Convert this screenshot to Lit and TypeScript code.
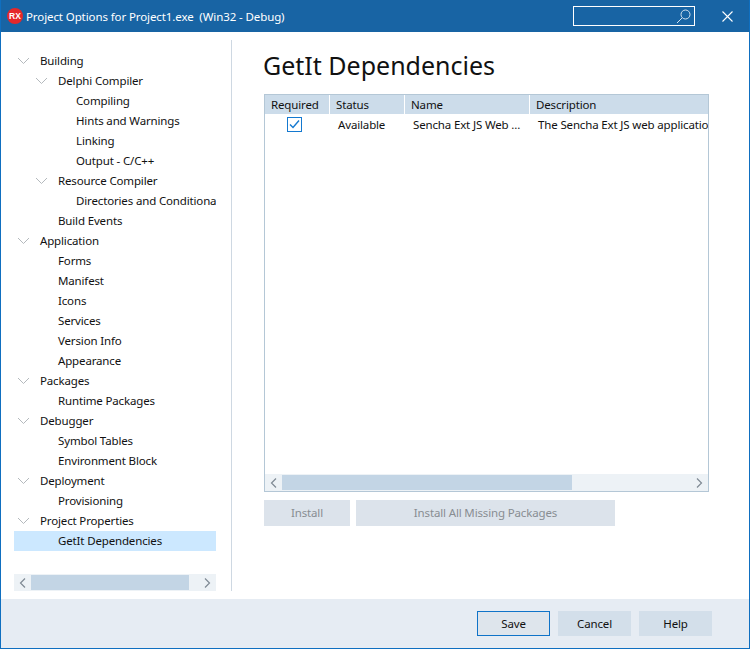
import { LitElement, html, css, svg } from 'lit';
import { customElement } from 'lit/decorators.js';

type TreeNode = { label: string; level: number; open?: boolean; selected?: boolean };

const tree: TreeNode[] = [
  { label: 'Building', level: 0, open: true },
  { label: 'Delphi Compiler', level: 1, open: true },
  { label: 'Compiling', level: 2 },
  { label: 'Hints and Warnings', level: 2 },
  { label: 'Linking', level: 2 },
  { label: 'Output - C/C++', level: 2 },
  { label: 'Resource Compiler', level: 1, open: true },
  { label: 'Directories and Conditionals', level: 2 },
  { label: 'Build Events', level: 1 },
  { label: 'Application', level: 0, open: true },
  { label: 'Forms', level: 1 },
  { label: 'Manifest', level: 1 },
  { label: 'Icons', level: 1 },
  { label: 'Services', level: 1 },
  { label: 'Version Info', level: 1 },
  { label: 'Appearance', level: 1 },
  { label: 'Packages', level: 0, open: true },
  { label: 'Runtime Packages', level: 1 },
  { label: 'Debugger', level: 0, open: true },
  { label: 'Symbol Tables', level: 1 },
  { label: 'Environment Block', level: 1 },
  { label: 'Deployment', level: 0, open: true },
  { label: 'Provisioning', level: 1 },
  { label: 'Project Properties', level: 0, open: true },
  { label: 'GetIt Dependencies', level: 1, selected: true },
];

const chevronDown = svg`<path d="M1 1l5.5 5.5L12 1" fill="none" stroke="#b4b9bd" stroke-width="1" />`;
const arrowLeft = html`<svg width="7" height="10" viewBox="0 0 7 10"><path d="M6 .5L1.5 5 6 9.5" fill="none" stroke="#7f8a94" stroke-width="1.2" /></svg>`;
const arrowRight = html`<svg width="7" height="10" viewBox="0 0 7 10"><path d="M1 .5L5.5 5 1 9.5" fill="none" stroke="#7f8a94" stroke-width="1.2" /></svg>`;

@customElement('app-root')
export class AppRoot extends LitElement {
  static styles = css`
    :host {
      display: block;
      width: 750px;
      height: 649px;
      font-family: 'Noto Sans', 'Open Sans', sans-serif;
      font-size: 11.5px;
      letter-spacing: -0.15px;
      color: #111;
    }

    .window {
      box-sizing: border-box;
      width: 750px;
      height: 649px;
      display: flex;
      flex-direction: column;
      border: 1px solid #0f6fc0;
      border-top: 0;
      background: #fff;
    }

    .titlebar {
      flex: none;
      height: 32px;
      display: flex;
      align-items: center;
      padding: 0 16px 0 6px;
      background: #1864a4;
      color: #fff;
    }

    .logo {
      width: 16px;
      height: 16px;
      border-radius: 50%;
      background: #e5282a;
      color: #fff;
      font: bold 8.5px/16px 'Liberation Sans', sans-serif;
      text-align: center;
      margin-right: 3px;
      letter-spacing: 0;
    }

    .title {
      flex: 1;
      white-space: pre;
      letter-spacing: -0.1px;
    }

    .search {
      box-sizing: border-box;
      width: 122px;
      height: 20px;
      border: 1px solid #fff;
      display: flex;
      align-items: center;
      justify-content: flex-end;
      padding-right: 3px;
      margin-right: 27px;
    }

    .close {
      display: block;
    }

    .main {
      flex: 1;
      min-height: 0;
      display: flex;
      padding: 8px 0 8px 13px;
    }

    .nav {
      flex: none;
      width: 202px;
      display: flex;
      flex-direction: column;
      padding-top: 11px;
    }

    .tree {
      flex: 1;
      overflow: hidden;
    }

    .row {
      height: 20px;
      display: flex;
      align-items: center;
      white-space: nowrap;
      overflow: hidden;
    }

    .row .label {
      padding-bottom: 2px;
    }

    .row.selected {
      background: #cce8ff;
    }

    .twisty {
      flex: none;
      width: 13px;
      height: 8px;
      margin-left: 3px;
      margin-right: 10px;
    }

    .scroll {
      flex: none;
      height: 17px;
      display: flex;
      align-items: center;
      background: #edf2f6;
    }

    .scroll .end {
      flex: none;
      width: 17px;
      display: flex;
      justify-content: center;
      align-items: center;
    }

    .thumb {
      height: 15px;
      background: #c3d5e5;
    }

    .gap {
      flex: 1;
    }

    .divider {
      flex: none;
      width: 1px;
      margin-left: 15px;
      background: #ced8e2;
    }

    .content {
      flex: 1;
      min-width: 0;
      padding: 0 40px 0 32px;
      display: flex;
      flex-direction: column;
    }

    h1 {
      box-sizing: border-box;
      margin: 0 0 0 -1px;
      height: 54px;
      padding-top: 7px;
      font-size: 25px;
      line-height: 36px;
      font-weight: 400;
      letter-spacing: 0;
      color: #111;
      white-space: nowrap;
    }

    .grid {
      box-sizing: border-box;
      height: 398px;
      border: 1px solid #b4c7d6;
      display: flex;
      flex-direction: column;
    }

    .grid-body {
      flex: 1;
      overflow: hidden;
    }

    .line {
      display: grid;
      grid-template-columns: 64px 75px 125px 1fr;
      white-space: nowrap;
    }

    .head {
      height: 19px;
      line-height: 19px;
      background: #ccdcea;
    }

    .head span {
      padding-left: 6px;
      border-left: 1px solid #fff;
      color: #111;
    }

    .head span:first-child {
      border-left: 0;
    }

    .cells {
      height: 20px;
      line-height: 22px;
    }

    .cells span {
      padding-left: 9px;
      overflow: hidden;
    }

    .cells .name {
      text-overflow: ellipsis;
    }

    .cells .check {
      padding: 3px 0 0 22px;
    }

    .box {
      display: block;
    }

    .actions {
      margin-top: 8px;
      display: flex;
      gap: 6px;
    }

    button {
      font: inherit;
      letter-spacing: inherit;
      border: 0;
      padding: 0;
      height: 26px;
      color: inherit;
    }

    .actions button {
      background: #dce3eb;
      color: #888d92;
      padding-bottom: 2px;
    }

    .install {
      width: 86px;
    }

    .install-all {
      width: 259px;
    }

    .footer {
      flex: none;
      height: 49px;
      box-sizing: border-box;
      background: #e6ecf3;
      display: flex;
      justify-content: flex-end;
      gap: 8px;
      padding: 12px 37px 0 0;
    }

    .footer button {
      box-sizing: border-box;
      width: 73px;
      height: 25px;
      background: #d3dfea;
    }

    .footer button.default {
      background: #dee5ec;
      border: 1px solid #0f73c8;
    }
  `;

  private renderRow(node: TreeNode) {
    return html`
      <div class="row ${node.selected ? 'selected' : ''}" style="padding-left: ${node.level * 18}px">
        ${node.open
          ? html`<svg class="twisty" viewBox="0 0 13 8">${chevronDown}</svg>`
          : html`<span class="twisty"></span>`}
        <span class="label">${node.label}</span>
      </div>
    `;
  }

  render() {
    return html`
      <div class="window">
        <header class="titlebar">
          <div class="logo">RX</div>
          <div class="title">Project Options for Project1.exe  (Win32 - Debug)</div>
          <div class="search">
            <svg width="15" height="15" viewBox="0 0 15 15">
              <circle cx="9.5" cy="5.5" r="4.5" fill="none" stroke="#d5e3ef" />
              <path d="M6 9L1 14" stroke="#d5e3ef" />
            </svg>
          </div>
          <svg class="close" width="11" height="11" viewBox="0 0 11 11">
            <path d="M.5.5l10 10M10.5.5l-10 10" stroke="#fff" stroke-width="1.1" />
          </svg>
        </header>

        <div class="main">
          <nav class="nav">
            <div class="tree">${tree.map((node) => this.renderRow(node))}</div>
            <div class="scroll">
              <div class="end">${arrowLeft}</div>
              <div class="thumb" style="width: 158px"></div>
              <div class="gap"></div>
              <div class="end">${arrowRight}</div>
            </div>
          </nav>
          <div class="divider"></div>
          <section class="content">
            <h1>GetIt Dependencies</h1>
            <div class="grid">
              <div class="grid-body">
                <div class="line head">
                  <span>Required</span><span>Status</span><span>Name</span><span>Description</span>
                </div>
                <div class="line cells">
                  <span class="check">
                    <svg class="box" width="15" height="15" viewBox="0 0 15 15">
                      <rect x=".5" y=".5" width="14" height="14" fill="#fff" stroke="#1479d0" />
                      <path d="M3 7.5l3 3 6-7" fill="none" stroke="#1479d0" stroke-width="1.4" />
                    </svg>
                  </span>
                  <span>Available</span>
                  <span class="name">Sencha Ext JS Web ...</span>
                  <span>The Sencha Ext JS web application framework</span>
                </div>
              </div>
              <div class="scroll">
                <div class="end">${arrowLeft}</div>
                <div class="thumb" style="width: 290px"></div>
                <div class="gap"></div>
                <div class="end">${arrowRight}</div>
              </div>
            </div>
            <div class="actions">
              <button class="install">Install</button>
              <button class="install-all">Install All Missing Packages</button>
            </div>
          </section>
        </div>

        <footer class="footer">
          <button class="default">Save</button>
          <button>Cancel</button>
          <button>Help</button>
        </footer>
      </div>
    `;
  }
}

declare global {
  interface HTMLElementTagNameMap {
    'app-root': AppRoot;
  }
}
